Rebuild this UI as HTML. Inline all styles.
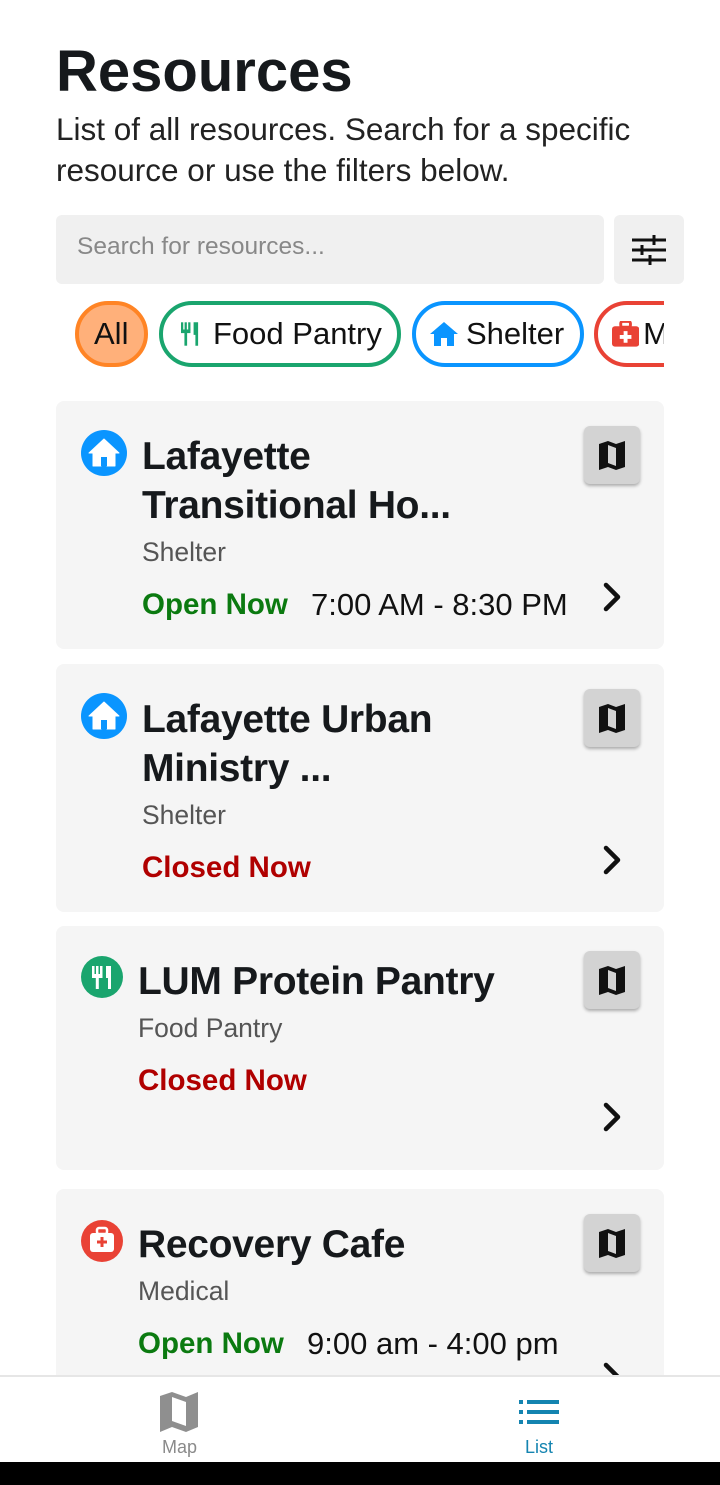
<!DOCTYPE html>
<html><head><meta charset="utf-8"><style>
*{margin:0;padding:0;box-sizing:border-box}
body{width:720px;height:1485px;position:relative;overflow:hidden;background:#fff;font-family:"Liberation Sans",Roboto,sans-serif;color:#111}
.a{position:absolute;white-space:nowrap}
.card{position:absolute;left:56px;width:608px;background:#f5f5f5;border-radius:8px}
.title{position:absolute;font-weight:bold;font-size:39px;line-height:49px;color:#16191c;letter-spacing:-0.3px}
.type{position:absolute;font-size:26.5px;color:#555}
.open{position:absolute;font-weight:bold;font-size:29.5px;color:#0b7a10}
.closed{position:absolute;font-weight:bold;font-size:29.5px;color:#b00000}
.time{position:absolute;font-size:31px;color:#111}
.mb{position:absolute;width:56px;height:58px;background:#d3d3d3;border-radius:6px;box-shadow:0 2px 3px rgba(0,0,0,.3);display:flex;align-items:center;justify-content:center}
.chev{position:absolute}
.chip{position:absolute;top:301px;height:66px;border-radius:33px;border:4px solid;font-size:31px;display:flex;align-items:center;padding-left:14px}
</style></head><body>
<div class="a" style="left:56px;top:38px;font-size:58px;font-weight:bold;color:#16191c">Resources</div>
<div class="a" style="left:56px;top:109px;font-size:31.5px;line-height:41px;color:#222">List of all resources. Search for a specific<br>resource or use the filters below.</div>
<div class="a" style="left:56px;top:215px;width:548px;height:69px;background:#f0f0f0;border-radius:6px"></div>
<div class="a" style="left:77px;top:233px;font-size:24.5px;color:#888">Search for resources...</div>
<div class="a" style="left:614px;top:215px;width:70px;height:69px;background:#f0f0f0;border-radius:6px"></div>
<svg class="a" style="left:630px;top:234px" width="38" height="32" viewBox="0 0 38 32"><g stroke="#111" stroke-width="3"><line x1="2" y1="6" x2="36" y2="6"/><line x1="2" y1="16" x2="36" y2="16"/><line x1="2" y1="26" x2="36" y2="26"/><line x1="24" y1="1" x2="24" y2="11"/><line x1="12" y1="11" x2="12" y2="21"/><line x1="20" y1="21" x2="20" y2="31"/></g></svg>
<div class="a" style="left:0;top:295px;width:664px;height:80px;overflow:hidden">
<div class="chip" style="top:6px;left:75px;width:73px;border-color:#ff8425;background:#ffb07a;padding-left:15px">All</div>
<div class="chip" style="top:6px;left:159px;width:242px;border-color:#1aa56e;padding-left:18px"><svg width="18" height="24" viewBox="0 0 20 26" style="margin-right:14px"><g fill="#1aa56e"><rect x="0" y="0" width="2.5" height="9"/><rect x="4" y="0" width="2.5" height="9"/><rect x="8" y="0" width="2.5" height="9"/><rect x="0" y="8" width="10.5" height="4"/><rect x="3.8" y="10" width="3" height="16"/><path d="M14 0h5v26h-3v-12h-2z"/></g></svg>Food Pantry</div>
<div class="chip" style="top:6px;left:412px;width:172px;border-color:#0a95ff"><svg width="28" height="24" viewBox="0 0 28 24" style="margin-right:8px"><path d="M14 0L0 12h4v12h7v-8h6v8h7V12h4z" fill="#0a95ff"/></svg>Shelter</div>
<div class="chip" style="top:6px;left:594px;width:160px;border-color:#e94235"><svg width="28" height="26" viewBox="0 0 28 26" style="margin-right:4px"><rect x="9" y="0" width="10" height="6" rx="2" fill="none" stroke="#e94235" stroke-width="3"/><rect x="0" y="5" width="28" height="21" rx="3" fill="#e94235"/><path d="M12 10h4v4h4v4h-4v4h-4v-4h-4v-4h4z" fill="#fff"/></svg>Medical</div>
</div>

<svg width="0" height="0" style="position:absolute"><defs>
<g id="mp"><path d="M0 3L9 0L17 3L26 0V26L17 29L9 26L0 29Z" fill="#111"/><path d="M9 4L17 7V25L9 22Z" fill="#d3d3d3"/></g>
<path id="ch" d="M3 3L15 15L3 27" fill="none" stroke="#111" stroke-width="4.5" stroke-linecap="round" stroke-linejoin="round"/>
<g id="hs"><circle cx="23" cy="23" r="23" fill="#0a95ff"/><path d="M23 9L8 23h4v13h8v-8h6v8h8V23h4z" fill="#fff" stroke="#fff" stroke-width="1" stroke-linejoin="round"/><rect x="20" y="27" width="6" height="9" fill="#0a95ff"/></g>
</defs></svg>

<div class="card" style="top:401px;height:248px"></div>
<svg class="a" style="left:81px;top:430px" width="46" height="46"><use href="#hs"/></svg>
<div class="title" style="left:142px;top:432px">Lafayette<br>Transitional Ho...</div>
<div class="type" style="left:142px;top:537px">Shelter</div>
<div class="open" style="left:142px;top:588px">Open Now</div>
<div class="time" style="left:311px;top:587px">7:00 AM - 8:30 PM</div>
<div class="mb" style="left:584px;top:426px"><svg width="26" height="29"><use href="#mp"/></svg></div>
<svg class="chev" style="left:603px;top:582px" width="20" height="32"><use href="#ch"/></svg>

<div class="card" style="top:664px;height:248px"></div>
<svg class="a" style="left:81px;top:693px" width="46" height="46"><use href="#hs"/></svg>
<div class="title" style="left:142px;top:695px">Lafayette Urban<br>Ministry ...</div>
<div class="type" style="left:142px;top:800px">Shelter</div>
<div class="closed" style="left:142px;top:851px">Closed Now</div>
<div class="mb" style="left:584px;top:689px"><svg width="26" height="29"><use href="#mp"/></svg></div>
<svg class="chev" style="left:603px;top:845px" width="20" height="32"><use href="#ch"/></svg>

<div class="card" style="top:926px;height:244px"></div>
<svg class="a" style="left:79px;top:954px" width="46" height="46"><circle cx="23" cy="23" r="21" fill="#1aa56e"/><g fill="#fff"><rect x="13" y="12" width="2.5" height="9"/><rect x="17" y="12" width="2.5" height="9"/><rect x="21" y="12" width="2.5" height="9"/><rect x="13" y="20" width="10.5" height="4"/><rect x="16.8" y="22" width="3" height="13"/><path d="M27 12h5v23h-3v-11h-2z"/></g></svg>
<div class="title" style="left:138px;top:957px">LUM Protein Pantry</div>
<div class="type" style="left:138px;top:1013px">Food Pantry</div>
<div class="closed" style="left:138px;top:1064px">Closed Now</div>
<div class="mb" style="left:584px;top:951px"><svg width="26" height="29"><use href="#mp"/></svg></div>
<svg class="chev" style="left:603px;top:1102px" width="20" height="32"><use href="#ch"/></svg>

<div class="card" style="top:1189px;height:240px"></div>
<svg class="a" style="left:79px;top:1218px" width="46" height="46"><circle cx="23" cy="23" r="21" fill="#e94235"/><rect x="18" y="10" width="10" height="6" rx="2" fill="none" stroke="#fff" stroke-width="2.5"/><rect x="11" y="15" width="24" height="19" rx="3" fill="#fff"/><path d="M21.5 19h3v3.5h3.5v3h-3.5v3.5h-3v-3.5h-3.5v-3h3.5z" fill="#e94235"/></svg>
<div class="title" style="left:138px;top:1220px">Recovery Cafe</div>
<div class="type" style="left:138px;top:1276px">Medical</div>
<div class="open" style="left:138px;top:1327px">Open Now</div>
<div class="time" style="left:307px;top:1326px">9:00 am - 4:00 pm</div>
<div class="mb" style="left:584px;top:1214px"><svg width="26" height="29"><use href="#mp"/></svg></div>
<svg class="chev" style="left:603px;top:1362px" width="20" height="32"><use href="#ch"/></svg>

<div class="a" style="left:0;top:1375px;width:720px;height:87px;background:#fff;border-top:2px solid #e6e6e6"></div>
<svg class="a" style="left:160px;top:1392px" width="38" height="40" viewBox="0 0 38 40"><path d="M0 4L12 0L26 5L38 0V35L26 40L12 35L0 40Z" fill="#8f8f8f"/><path d="M12 5L26 10V34L12 29Z" fill="#fff"/></svg>
<div class="a" style="left:162px;top:1437px;font-size:18px;color:#8a8a8a">Map</div>
<svg class="a" style="left:519px;top:1400px" width="40" height="26"><g fill="#1484b0"><rect x="0" y="0" width="4" height="4"/><rect x="0" y="10" width="4" height="4"/><rect x="0" y="20" width="4" height="4"/><rect x="8" y="0" width="32" height="4"/><rect x="8" y="10" width="32" height="4"/><rect x="8" y="20" width="32" height="4"/></g></svg>
<div class="a" style="left:525px;top:1437px;font-size:18px;color:#1484b0">List</div>
<div class="a" style="left:0;top:1462px;width:720px;height:23px;background:#000"></div>
</body></html>
